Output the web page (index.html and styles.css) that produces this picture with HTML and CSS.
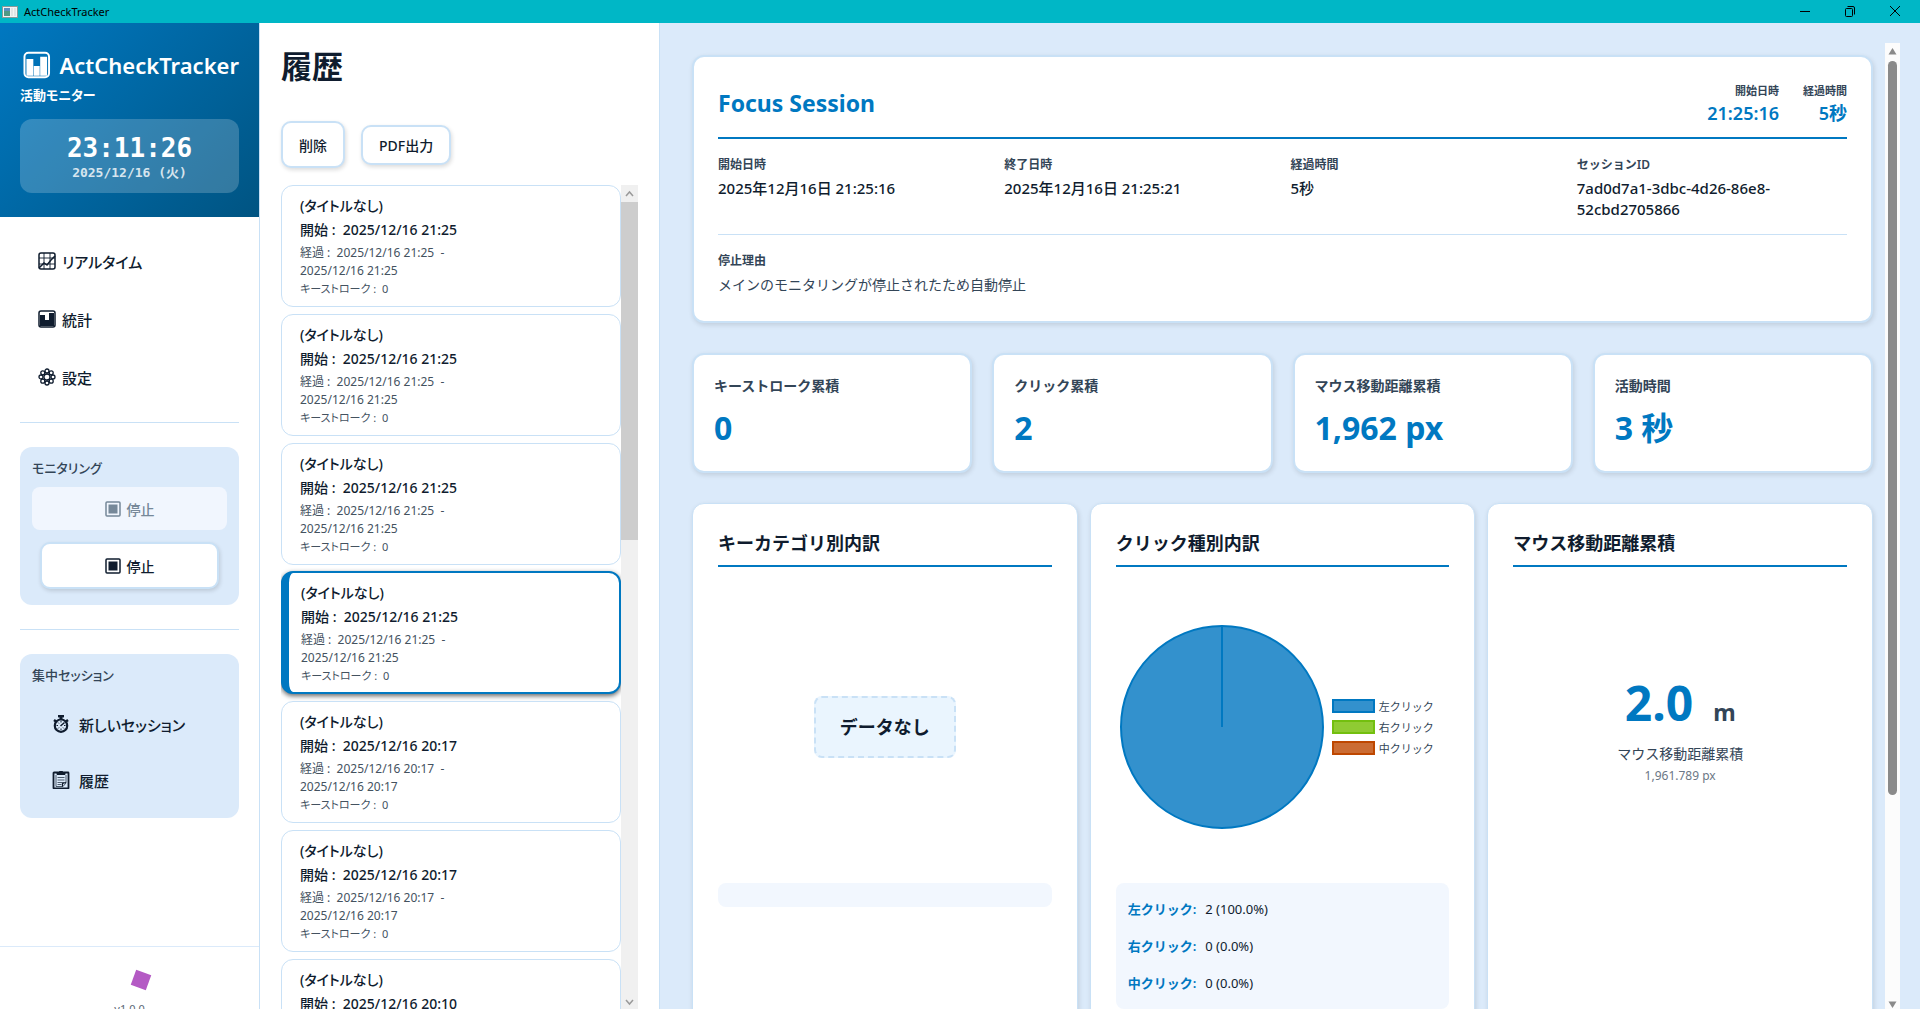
FILE: index.html
```html
<!DOCTYPE html>
<html lang="ja">
<head>
    <meta charset="UTF-8">
    <meta name="viewport" content="width=device-width, initial-scale=1.0">
    <title>ActCheckTracker</title>
    <link rel="stylesheet" href="styles.css">
</head>
<body>
    <header class="titlebar">
        <svg class="app-icon" viewBox="0 0 16 14">
            <rect x="0.5" y="1.5" width="15" height="11" fill="#f4f4f4" stroke="#8a9a9a"/>
            <rect x="2" y="3" width="6" height="8" fill="#4f9a86"/>
            <rect x="2" y="3" width="6" height="3" fill="#5b8fc0"/>
            <path d="M10 3v8M13 3v8" stroke="#cfd6d6"/>
        </svg>
        <span class="titlebar-name">ActCheckTracker</span>
        <div class="window-buttons">
            <button type="button" aria-label="最小化"><svg viewBox="0 0 12 12"><path d="M1 6.500h10"/></svg></button>
            <button type="button" aria-label="元に戻す"><svg viewBox="0 0 12 12"><rect x="1.500" y="3.500" width="7" height="8" rx="1"/><path d="M3.500 1.500h5.500q1.500 0 1.500 1.500v6.500"/></svg></button>
            <button type="button" aria-label="閉じる"><svg viewBox="0 0 12 12"><path d="M1 1l10 10M11 1L1 11"/></svg></button>
        </div>
    </header>

    <div class="app">
        <aside class="sidebar">
            <div class="brand">
                <div class="brand-row">
                    <svg class="brand-icon" viewBox="0 0 28 28">
                        <rect x="1.500" y="1.500" width="25" height="25" rx="4" fill="none" stroke="#fff" stroke-width="2"/>
                        <path d="M3.500 8h7v17h-7zM11 15h6v10h-6zM17.500 5.500h7V25h-7z" fill="#fff"/>
                    </svg>
                    <span class="brand-name">ActCheckTracker</span>
                </div>
                <p class="brand-sub">活動モニター</p>
                <div class="clock">
                    <div class="clock-time">23:11:26</div>
                    <div class="clock-date">2025/12/16 (火)</div>
                </div>
            </div>

            <nav class="nav">
                <a href="#realtime" class="nav-item">
                    <svg class="icon" viewBox="0 0 18 18" fill="none" stroke="#0f1c2e">
                        <rect x="1" y="1" width="16" height="16" rx="2" stroke-width="1.500"/>
                        <path d="M6 1v16M12 1v16M1 6h16M1 12h16" stroke-width="0.900"/>
                        <path d="M1 16l5-5 3 2 4-5 4-4" stroke-width="1.500"/>
                    </svg>
                    リアルタイム
                </a>
                <a href="#stats" class="nav-item">
                    <svg class="icon" viewBox="0 0 18 18">
                        <rect x="1" y="1" width="16" height="16" rx="2" fill="none" stroke="#0f1c2e" stroke-width="1.500"/>
                        <path d="M2 5h5v11H2zM7 10h4v6H7zM11 3h5v13h-5z" fill="#0f1c2e"/>
                    </svg>
                    統計
                </a>
                <a href="#settings" class="nav-item">
                    <svg class="icon" viewBox="0 0 18 18" fill="none" stroke="#0f1c2e" stroke-width="1.300">
                        <circle cx="9" cy="9" r="3"/>
                        <circle cx="9" cy="3" r="2"/><circle cx="13.200" cy="4.800" r="2"/>
                        <circle cx="15" cy="9" r="2"/><circle cx="13.200" cy="13.200" r="2"/>
                        <circle cx="9" cy="15" r="2"/><circle cx="4.800" cy="13.200" r="2"/>
                        <circle cx="3" cy="9" r="2"/><circle cx="4.800" cy="4.800" r="2"/>
                    </svg>
                    設定
                </a>
            </nav>

            <hr class="divider">

            <section class="side-box">
                <h2 class="side-title">モニタリング</h2>
                <button type="button" class="btn-monitor" disabled>
                    <svg class="icon-stop" viewBox="0 0 16 16"><rect x="1" y="1" width="14" height="14" rx="1" fill="none" stroke="currentColor" stroke-width="1.500"/><rect x="3.500" y="3.500" width="9" height="9" fill="currentColor"/></svg>
                    停止
                </button>
                <button type="button" class="btn-monitor btn-stop">
                    <svg class="icon-stop" viewBox="0 0 16 16"><rect x="1" y="1" width="14" height="14" rx="1" fill="none" stroke="currentColor" stroke-width="1.500"/><rect x="3.500" y="3.500" width="9" height="9" fill="currentColor"/></svg>
                    停止
                </button>
            </section>

            <hr class="divider">

            <section class="side-box session-box">
                <h2 class="side-title">集中セッション</h2>
                <a href="#new" class="session-item">
                    <svg class="icon" viewBox="0 0 18 18" fill="none" stroke="#0f1c2e">
                        <path d="M6 1.200h6" stroke-width="2.400"/>
                        <path d="M9 1v4" stroke-width="3"/>
                        <path d="M2 5l2 1.500M16 5l-2 1.500" stroke-width="2.400"/>
                        <circle cx="9" cy="10.700" r="6.200" stroke-width="2.200"/>
                        <path d="M9 6v1.500M9 13.500v1.500M4.500 10.500H6M12 10.500h1.500M6 7.500l1 1M6 13.500l1-1M12 13.500l-1-1"/>
                        <path d="M8.500 11L12.500 7.500" stroke-width="1.500"/>
                    </svg>
                    新しいセッション
                </a>
                <a href="#history" class="session-item">
                    <svg class="icon" viewBox="0 0 18 18" fill="none" stroke="#0f1c2e">
                        <rect x="1.500" y="1.500" width="15" height="16" rx="0.500" stroke-width="1.800"/>
                        <path d="M5 3.500h8V2h-2.500V0.500h-3V2H5z" fill="#0f1c2e"/>
                        <path d="M4 4v11.500M14 4v8l-3 3.500H4" stroke-width="0.700"/>
                        <path d="M5.500 6.500h7M5.500 9h7M5.500 11.500h7M5.500 13.500h4" stroke-width="0.700"/>
                        <path d="M10.500 15.500v-3l3.500-1" stroke-width="1.200"/>
                    </svg>
                    履歴
                </a>
            </section>

            <footer class="side-footer">
                <svg class="footer-mark" viewBox="0 0 40 20"><rect x="23" y="1" width="16" height="16" fill="#b45ac4" transform="rotate(20 31 9)"/></svg>
                <div>v1.0.0</div>
            </footer>
        </aside>

        <section class="history">
            <h1>履歴</h1>
            <div class="history-actions">
                <button type="button" class="btn btn-delete">削除</button>
                <button type="button" class="btn">PDF出力</button>
            </div>
            <div class="history-body">
                <ul class="session-list">
                    <li class="session-card">
                        <div class="s-title">(タイトルなし)</div>
                        <div class="s-start">開始 :&nbsp; 2025/12/16 21:25</div>
                        <div class="s-meta">経過 :&nbsp; 2025/12/16 21:25 &nbsp;-<br>2025/12/16 21:25</div>
                        <div class="s-meta">キーストローク :&nbsp; 0</div>
                    </li>
                    <li class="session-card">
                        <div class="s-title">(タイトルなし)</div>
                        <div class="s-start">開始 :&nbsp; 2025/12/16 21:25</div>
                        <div class="s-meta">経過 :&nbsp; 2025/12/16 21:25 &nbsp;-<br>2025/12/16 21:25</div>
                        <div class="s-meta">キーストローク :&nbsp; 0</div>
                    </li>
                    <li class="session-card">
                        <div class="s-title">(タイトルなし)</div>
                        <div class="s-start">開始 :&nbsp; 2025/12/16 21:25</div>
                        <div class="s-meta">経過 :&nbsp; 2025/12/16 21:25 &nbsp;-<br>2025/12/16 21:25</div>
                        <div class="s-meta">キーストローク :&nbsp; 0</div>
                    </li>
                    <li class="session-card selected">
                        <div class="s-title">(タイトルなし)</div>
                        <div class="s-start">開始 :&nbsp; 2025/12/16 21:25</div>
                        <div class="s-meta">経過 :&nbsp; 2025/12/16 21:25 &nbsp;-<br>2025/12/16 21:25</div>
                        <div class="s-meta">キーストローク :&nbsp; 0</div>
                    </li>
                    <li class="session-card">
                        <div class="s-title">(タイトルなし)</div>
                        <div class="s-start">開始 :&nbsp; 2025/12/16 20:17</div>
                        <div class="s-meta">経過 :&nbsp; 2025/12/16 20:17 &nbsp;-<br>2025/12/16 20:17</div>
                        <div class="s-meta">キーストローク :&nbsp; 0</div>
                    </li>
                    <li class="session-card">
                        <div class="s-title">(タイトルなし)</div>
                        <div class="s-start">開始 :&nbsp; 2025/12/16 20:17</div>
                        <div class="s-meta">経過 :&nbsp; 2025/12/16 20:17 &nbsp;-<br>2025/12/16 20:17</div>
                        <div class="s-meta">キーストローク :&nbsp; 0</div>
                    </li>
                    <li class="session-card">
                        <div class="s-title">(タイトルなし)</div>
                        <div class="s-start">開始 :&nbsp; 2025/12/16 20:10</div>
                    </li>
                </ul>
                <div class="list-scroll">
                    <svg viewBox="0 0 17 17"><path d="M5 11l3.500-4 3.500 4"/></svg>
                    <div class="list-thumb"></div>
                    <svg viewBox="0 0 17 17"><path d="M5 8l3.500 4L12 8"/></svg>
                </div>
            </div>
        </section>

        <main class="detail">
            <div class="detail-content">
                <section class="card summary">
                    <div class="summary-head">
                        <h2>Focus Session</h2>
                        <div class="head-meta">
                            <div>
                                <div class="head-label">開始日時</div>
                                <div class="head-value">21:25:16</div>
                            </div>
                            <div>
                                <div class="head-label">経過時間</div>
                                <div class="head-value">5秒</div>
                            </div>
                        </div>
                    </div>
                    <dl class="info-grid">
                        <div><dt>開始日時</dt><dd>2025年12月16日 21:25:16</dd></div>
                        <div><dt>終了日時</dt><dd>2025年12月16日 21:25:21</dd></div>
                        <div><dt>経過時間</dt><dd>5秒</dd></div>
                        <div><dt>セッションID</dt><dd>7ad0d7a1-3dbc-4d26-86e8-<wbr>52cbd2705866</dd></div>
                    </dl>
                    <div class="reason">
                        <div class="reason-label">停止理由</div>
                        <p>メインのモニタリングが停止されたため自動停止</p>
                    </div>
                </section>

                <section class="stats">
                    <div class="card stat"><h3>キーストローク累積</h3><div class="stat-value">0</div></div>
                    <div class="card stat"><h3>クリック累積</h3><div class="stat-value">2</div></div>
                    <div class="card stat"><h3>マウス移動距離累積</h3><div class="stat-value">1,962 px</div></div>
                    <div class="card stat"><h3>活動時間</h3><div class="stat-value">3 秒</div></div>
                </section>

                <section class="charts">
                    <div class="card chart-card">
                        <h3>キーカテゴリ別内訳</h3>
                        <div class="chart-area"><div class="no-data">データなし</div></div>
                        <div class="breakdown"></div>
                    </div>
                    <div class="card chart-card">
                        <h3>クリック種別内訳</h3>
                        <div class="chart-area pie-area">
                            <svg class="pie" viewBox="0 0 204 204">
                                <circle cx="102" cy="102" r="101" fill="#3391cd" stroke="#0078c1" stroke-width="2"/>
                                <path d="M102 102V1" stroke="#0078c1" stroke-width="2"/>
                            </svg>
                            <ul class="legend">
                                <li><span class="swatch left"></span>左クリック</li>
                                <li><span class="swatch right"></span>右クリック</li>
                                <li><span class="swatch middle"></span>中クリック</li>
                            </ul>
                        </div>
                        <div class="breakdown">
                            <div class="breakdown-row"><strong>左クリック:</strong>2 (100.0%)</div>
                            <div class="breakdown-row"><strong>右クリック:</strong>0 (0.0%)</div>
                            <div class="breakdown-row"><strong>中クリック:</strong>0 (0.0%)</div>
                        </div>
                    </div>
                    <div class="card chart-card">
                        <h3>マウス移動距離累積</h3>
                        <div class="chart-area distance">
                            <div class="distance-value">2.0<span>m</span></div>
                            <div class="distance-label">マウス移動距離累積</div>
                            <div class="distance-px">1,961.789 px</div>
                        </div>
                    </div>
                </section>
            </div>
            <div class="page-scroll">
                <svg viewBox="0 0 15 18"><path d="M7.500 5l4 6.500h-8z"/></svg>
                <div class="page-thumb"></div>
                <svg viewBox="0 0 15 18"><path d="M7.500 17l4-6.500h-8z"/></svg>
            </div>
        </main>
    </div>
</body>
</html>
```
FILE: styles.css
```css
* {
    box-sizing: border-box;
}
body {
    margin: 0;
    height: 100vh;
    overflow: hidden;
    display: flex;
    flex-direction: column;
    font-family: "Noto Sans", "Noto Sans CJK JP", sans-serif;
    font-size: 14px;
    color: #0f1c2e;
    background-color: #dbeafa;
}
h1, h2, h3, p, ul, dl, dd {
    margin: 0;
    padding: 0;
}
ul {
    list-style: none;
}
a {
    color: inherit;
    text-decoration: none;
}
button {
    font-family: inherit;
    color: inherit;
    padding: 0;
}

/* title bar */
.titlebar {
    flex: 0 0 23px;
    display: flex;
    align-items: center;
    background-color: #00b7c6;
    color: #000;
    padding-left: 2px;
}
.app-icon {
    width: 16px;
    height: 14px;
}
.titlebar-name {
    font-size: 11px;
    margin-left: 6px;
}
.window-buttons {
    margin-left: auto;
    display: flex;
    padding-right: 3px;
}
.window-buttons button {
    width: 45px;
    height: 22px;
    border: none;
    background: none;
}
.window-buttons svg {
    width: 12px;
    height: 12px;
    fill: none;
    stroke: #000;
}

.app {
    flex: 1;
    min-height: 0;
    display: flex;
}

/* sidebar */
.sidebar {
    flex: 0 0 260px;
    display: flex;
    flex-direction: column;
    background-color: #fff;
    border-right: 1px solid #c9e1f6;
    overflow: hidden;
}
.brand {
    padding: 24px 20px;
    color: #fff;
    background: linear-gradient(135deg, #0078c1, #005482);
}
.brand-row {
    display: flex;
    align-items: center;
    gap: 9px;
    padding-left: 3px;
    line-height: 36px;
}
.brand-icon {
    width: 28px;
    height: 28px;
}
.brand-name {
    font-size: 22px;
    font-weight: 600;
    white-space: nowrap;
}
.brand-sub {
    font-size: 13px;
    font-weight: 600;
    line-height: 24px;
    font-feature-settings: "palt";
    margin-bottom: 12px;
}
.clock {
    padding: 12px;
    text-align: center;
    border-radius: 12px;
    background-color: rgba(255, 255, 255, 0.2);
    font-family: "DejaVu Sans Mono", "Noto Sans CJK JP", monospace;
    font-weight: 700;
}
.clock-time {
    font-size: 26px;
    line-height: 34px;
}
.clock-date {
    font-size: 13px;
    line-height: 16px;
    opacity: 0.8;
}
.nav {
    padding: 20px 20px 21px;
    display: flex;
    flex-direction: column;
    gap: 10px;
}
.nav-item, .session-item {
    display: flex;
    align-items: center;
    height: 48px;
    font-size: 15px;
    font-weight: 500;
    font-feature-settings: "palt";
}
.nav-item {
    gap: 6px;
    padding-left: 18px;
}
.session-item {
    gap: 9px;
    padding-left: 20px;
}
.session-item + .session-item {
    margin-top: 8px;
}
.icon {
    width: 18px;
    height: 18px;
}
.divider {
    width: auto;
    margin: 0 20px;
    border: none;
    border-top: 1px solid #c9e1f6;
}
.side-box {
    display: flex;
    flex-direction: column;
    margin: 24px 20px;
    padding: 12px 12px 16px;
    border-radius: 12px;
    background-color: #dbeafa;
}
.session-box {
    margin-bottom: 0;
    padding-bottom: 14px;
}
.side-title {
    font-size: 13px;
    font-weight: 500;
    line-height: 18px;
    color: #334557;
    margin-bottom: 10px;
    font-feature-settings: "palt";
}
.session-box .side-title {
    margin-bottom: 16px;
}
.btn-monitor {
    display: flex;
    align-items: center;
    justify-content: center;
    gap: 6px;
    height: 43px;
    border: none;
    border-radius: 8px;
    background-color: #f1f6fe;
    font-size: 14px;
    font-weight: 500;
}
.btn-monitor:disabled {
    color: #768899;
}
.btn-stop {
    height: 47px;
    margin: 12px 8px 0;
    border: 2px solid #c9e1f6;
    border-radius: 10px;
    background-color: #fff;
    box-shadow: 1px 2px 4px rgba(0, 0, 0, 0.14);
}
.icon-stop {
    width: 16px;
    height: 16px;
}
.side-footer {
    flex: 0 0 63px;
    margin-top: auto;
    padding-top: 24px;
    border-top: 1px solid #dbeafa;
    overflow: hidden;
    text-align: center;
    font-size: 11px;
    line-height: 18px;
    color: #5a6875;
}
.footer-mark {
    display: block;
    width: 40px;
    height: 20px;
    margin: 0 auto 9px;
    overflow: visible;
}

/* history list */
.history {
    flex: 0 0 400px;
    display: flex;
    flex-direction: column;
    padding: 20px 21px 0;
    background-color: #fff;
    border-right: 1px solid #c9e1f6;
}
.history h1 {
    font-size: 31px;
    font-weight: 600;
    line-height: 46px;
}
.history-actions {
    display: flex;
    align-items: center;
    gap: 16px;
    margin: 32px 0 17px;
}
.btn {
    height: 40px;
    padding: 0 16px;
    border: 2px solid #c9e1f6;
    border-radius: 10px;
    background-color: #fff;
    font-size: 14px;
    font-weight: 500;
    box-shadow: 1px 2px 4px rgba(0, 0, 0, 0.14);
}
.btn-delete {
    height: 47px;
}
.history-body {
    flex: 1;
    min-height: 0;
    display: flex;
}
.session-list {
    flex: 1;
    overflow: hidden;
    display: flex;
    flex-direction: column;
    gap: 7px;
}
.session-card {
    flex: none;
    padding: 8px 18px;
    border: 1px solid #c9e1f6;
    border-radius: 12px;
    background-color: #fff;
}
.session-card.selected {
    margin-top: -1px;
    padding: 8px 18px 7px 12px;
    border: 2px solid #0078c1;
    border-left-width: 8px;
    box-shadow: 0 2px 5px rgba(0, 0, 0, 0.6);
}
.s-title, .s-start {
    font-size: 14px;
    font-weight: 500;
    line-height: 24px;
}
.s-title {
    font-feature-settings: "palt";
}
.s-meta {
    font-size: 12px;
    line-height: 18px;
    color: #44525f;
}
.s-start + .s-meta {
    margin-top: 2px;
}
.s-meta:last-child {
    font-size: 11px;
    font-feature-settings: "palt";
}
.list-scroll {
    flex: 0 0 17px;
    display: flex;
    flex-direction: column;
    background-color: #f0f0f0;
}
.list-scroll svg {
    flex: none;
    width: 17px;
    height: 17px;
    fill: none;
    stroke: #9a9a9a;
    stroke-width: 1.5;
}
.list-thumb {
    height: 41%;
    margin-bottom: auto;
    background-color: #cdcdcd;
}

/* session detail */
.detail {
    flex: 1;
    min-width: 0;
    display: flex;
    padding: 20px 20px 0;
}
.detail-content {
    flex: 1;
    min-width: 0;
    padding: 12px 12px 0;
    overflow: hidden;
}
.card {
    border: 2px solid #c9e1f6;
    border-radius: 12px;
    background-color: #fff;
    box-shadow: 1px 2px 5px rgba(0, 0, 0, 0.12);
}
.summary {
    padding: 24px;
}
.summary-head {
    display: flex;
    justify-content: space-between;
    align-items: center;
    padding-bottom: 12px;
    border-bottom: 2px solid #0078c1;
}
.summary-head h2 {
    font-size: 23px;
    font-weight: 700;
    line-height: 32px;
    color: #0078c1;
}
.head-meta {
    display: flex;
    gap: 24px;
    text-align: right;
}
.head-label {
    font-size: 11px;
    font-weight: 600;
    line-height: 20px;
    color: #334557;
}
.head-value {
    font-size: 18px;
    font-weight: 600;
    line-height: 24px;
    color: #0078c1;
}
.info-grid {
    display: grid;
    grid-template-columns: repeat(4, 1fr);
    gap: 16px;
    padding: 16px 0 14px;
    border-bottom: 1px solid #c9e1f6;
}
.info-grid dt, .reason-label {
    font-size: 12px;
    font-weight: 600;
    line-height: 20px;
    color: #334557;
    margin-bottom: 3px;
}
.info-grid dd {
    font-size: 15px;
    font-weight: 500;
    line-height: 21px;
}
.reason {
    padding: 16px 0 2px;
}
.reason p {
    font-size: 14px;
    line-height: 21px;
    color: #334557;
}
.stats {
    display: grid;
    grid-template-columns: repeat(4, 1fr);
    gap: 20px;
    margin: 30px 0;
}
.stat {
    padding: 20px;
}
.stat h3 {
    font-size: 14px;
    font-weight: 600;
    line-height: 21px;
    color: #334557;
}
.stat-value {
    margin: 10px 0 2px;
    font-size: 32px;
    font-weight: 700;
    line-height: 43px;
    color: #0078c1;
}
.charts {
    display: grid;
    grid-template-columns: repeat(3, 1fr);
    gap: 12px;
}
.chart-card {
    padding: 24px 25px 40px;
    border-width: 1px;
}
.chart-card h3 {
    font-size: 18px;
    font-weight: 600;
    line-height: 30px;
    padding-bottom: 7px;
    border-bottom: 2px solid #0078c1;
}
.chart-area {
    height: 280px;
    margin: 20px 0 16px;
    display: flex;
    align-items: center;
    justify-content: center;
}
.no-data {
    padding: 16px 24px;
    border: 2px dashed #c9e1f6;
    border-radius: 8px;
    background-color: #eaf5fe;
    font-size: 18px;
    font-weight: 600;
    line-height: 26px;
}
.pie-area {
    gap: 8px;
    justify-content: flex-start;
    padding-left: 4px;
}
.pie {
    width: 204px;
    height: 204px;
}
.legend li {
    display: flex;
    align-items: center;
    gap: 4px;
    font-size: 11px;
    line-height: 21px;
    color: #334557;
}
.swatch {
    width: 43px;
    height: 14px;
    border: 2px solid #0078c1;
    background-color: #3391cd;
}
.swatch.right {
    border-color: #73bf0f;
    background-color: #8fcb33;
}
.swatch.middle {
    border-color: #be4700;
    background-color: #cb6c33;
}
.breakdown {
    display: flex;
    flex-direction: column;
    gap: 9px;
    padding: 12px;
    border-radius: 8px;
    background-color: #f2f7fe;
}
.breakdown-row {
    display: flex;
    gap: 9px;
    font-size: 13px;
    line-height: 28px;
}
.breakdown-row strong {
    color: #0078c1;
    font-weight: 600;
}
.distance {
    flex-direction: column;
    padding-top: 5px;
}
.distance-value {
    font-size: 48px;
    font-weight: 700;
    line-height: 60px;
    color: #0078c1;
}
.distance-value span {
    margin-left: 20px;
    font-size: 23px;
    color: #334557;
}
.distance-label {
    font-size: 14px;
    line-height: 23px;
    color: #334557;
}
.distance-px {
    font-size: 12px;
    line-height: 21px;
    color: #6b7785;
}
.page-scroll {
    flex: 0 0 15px;
    display: flex;
    flex-direction: column;
    align-items: center;
    background-color: #fcfcfc;
}
.page-scroll svg {
    flex: none;
    width: 15px;
    height: 18px;
    fill: #8a8a8a;
}
.page-thumb {
    width: 9px;
    height: 76%;
    margin-bottom: auto;
    border-radius: 5px;
    background-color: #8a8a8a;
}
```
